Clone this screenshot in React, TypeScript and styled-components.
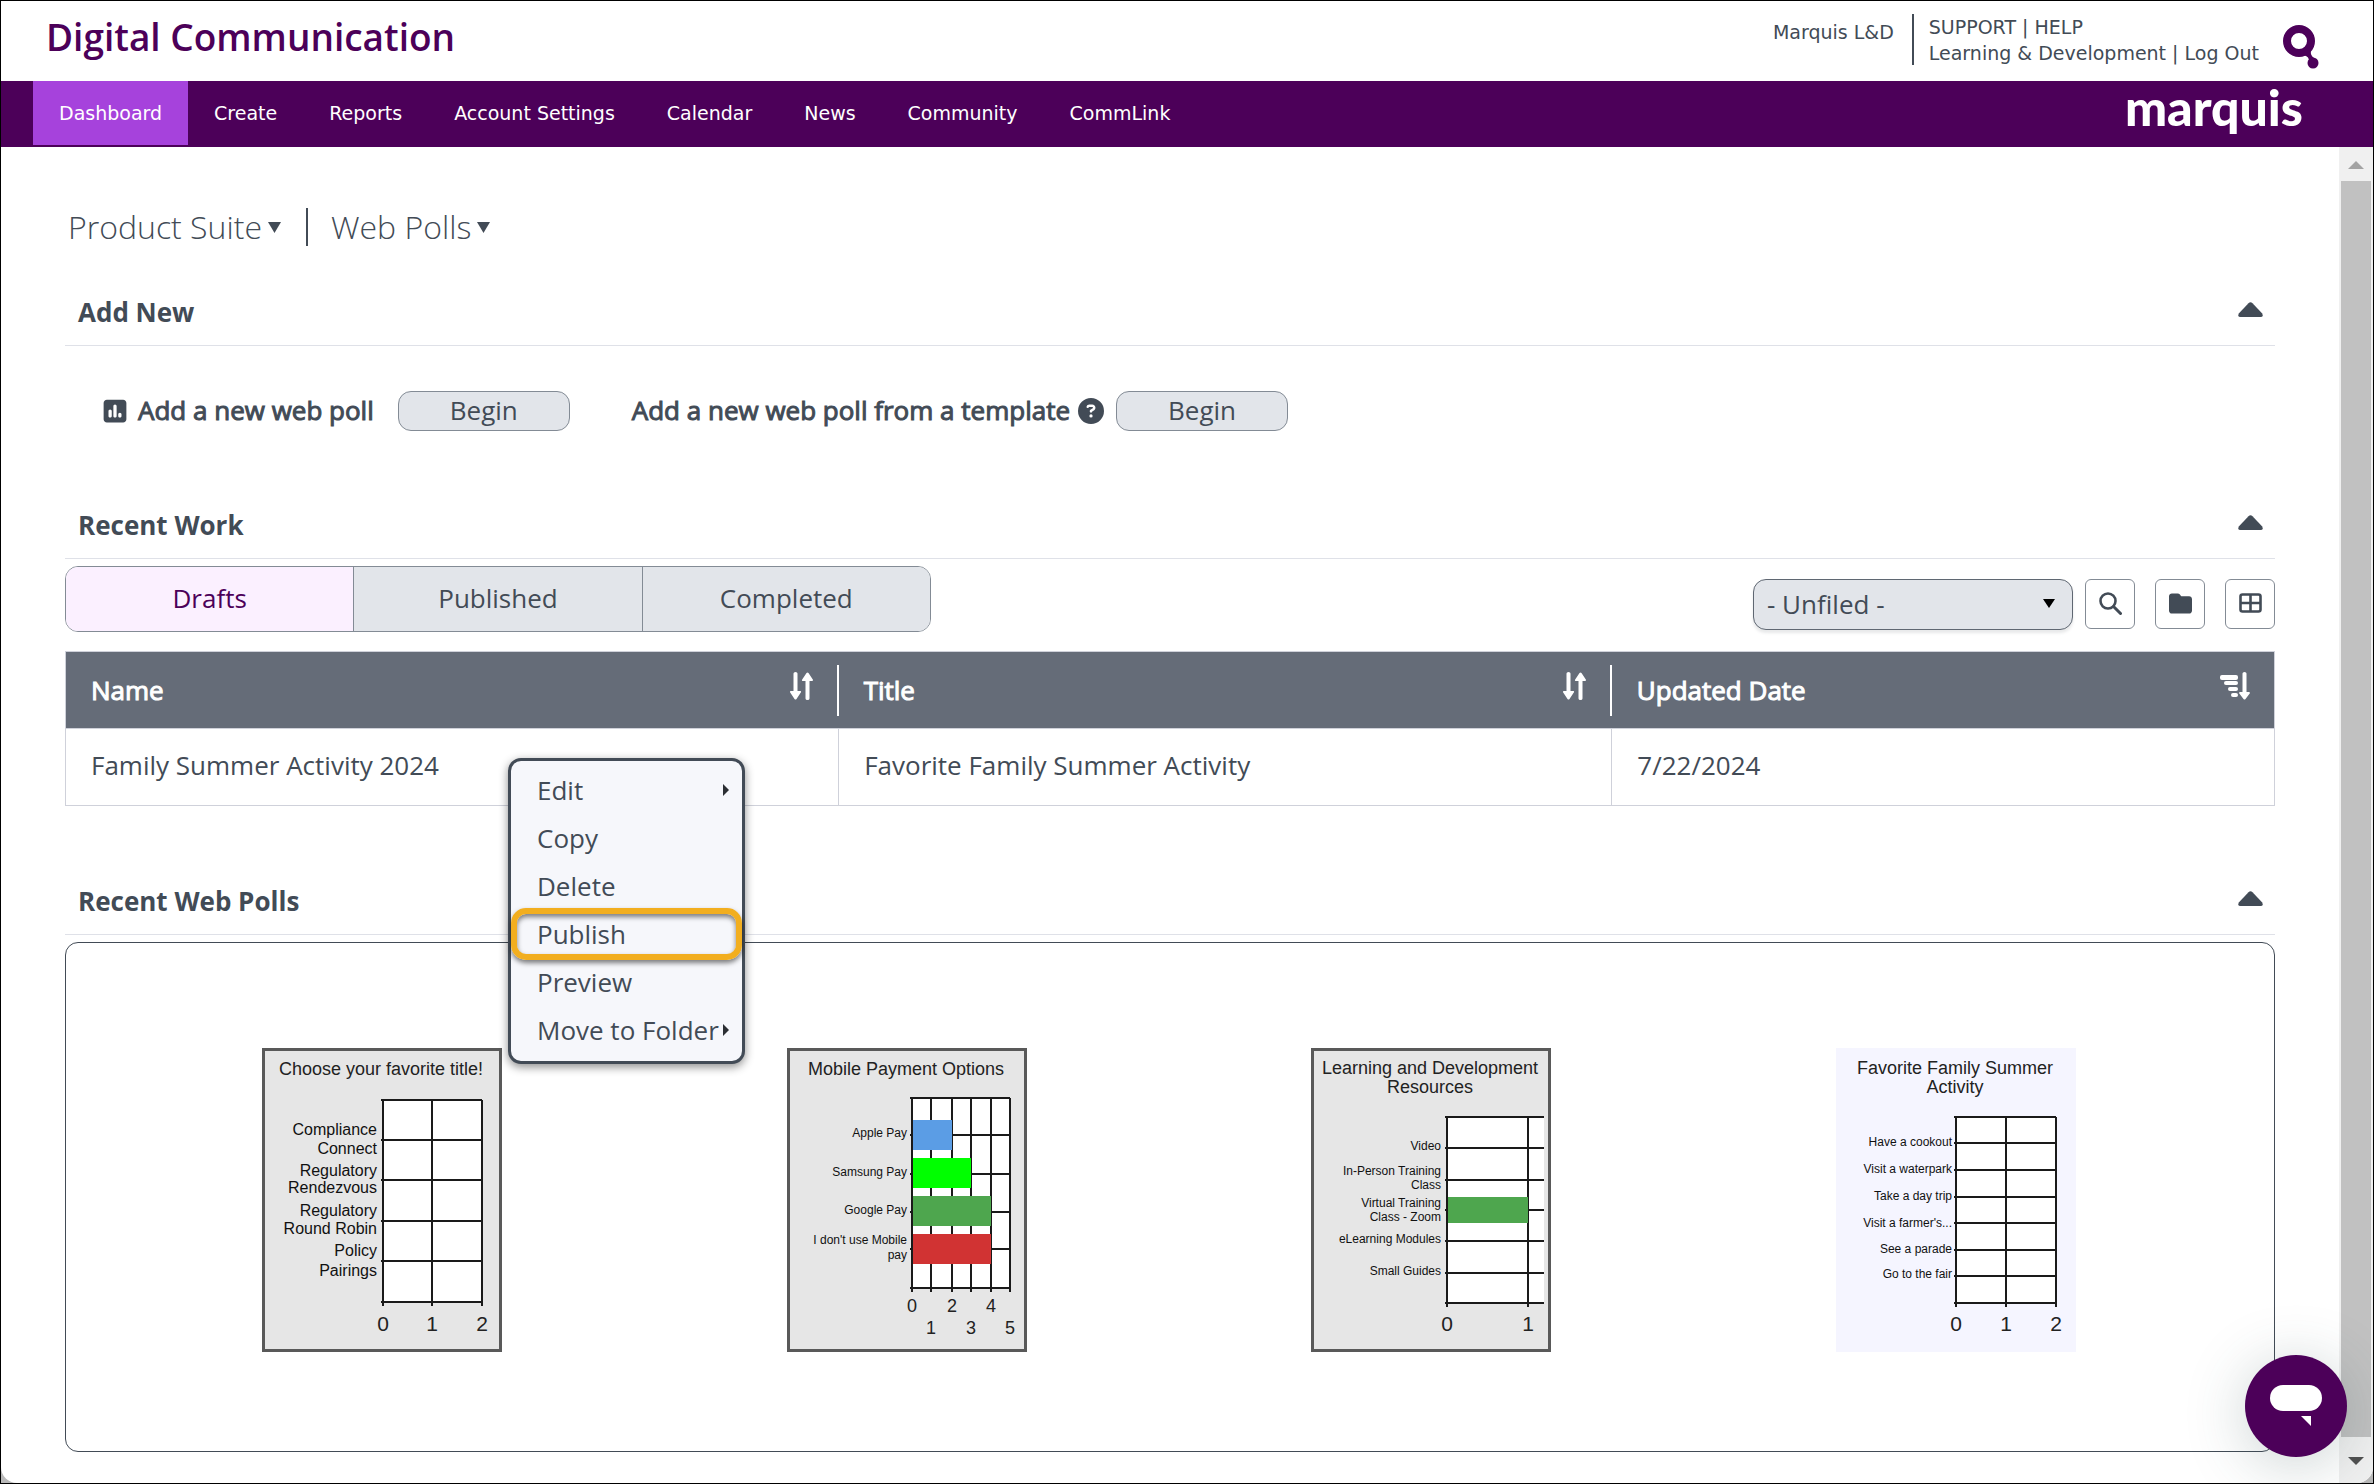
import React, { useState } from "react";
import styled, { createGlobalStyle } from "styled-components";
import { FaCircleQuestion, FaFolder, FaSquarePollVertical } from "react-icons/fa6";

const ink = "#424b56";
const plum = "#4c0059";
const sans = `"Open Sans", "Noto Sans", sans-serif`;
const wide = `"DejaVu Sans", Verdana, sans-serif`;

const GlobalStyle = createGlobalStyle`
  *, *::before, *::after { box-sizing: border-box; }
  body { margin: 0; background: #b9b9b9; font-family: ${sans}; font-size: 26px; color: ${ink}; }
  button, select { font: inherit; color: inherit; }
  h1, h2, p, ul { margin: 0; padding: 0; }
`;

const Frame = styled.div`
  min-height: 100vh;
  display: flex;
  border: 1px solid #000;
`;

const Window = styled.div`
  flex: 1;
  min-width: 0;
  display: flex;
  flex-direction: column;
  background: #fff;
  border-radius: 0 0 16px 16px;
  overflow: hidden;
`;

/* Top bar */

const Header = styled.header`
  height: 80px;
  padding: 0 54px 0 45px;
  display: flex;
  justify-content: space-between;
  align-items: flex-start;
`;

const Brand = styled.h1`
  padding-top: 8px;
  font-size: 37px;
  line-height: 56px;
  font-weight: 600;
  color: ${plum};
`;

const Account = styled.div`
  display: flex;
  align-items: flex-start;
  padding-top: 13px;
  font-family: ${wide};
  font-size: 19px;
  line-height: 26px;
`;

const Company = styled.p`
  height: 51px;
  padding: 5px 18px 0 0;
  border-right: 2px solid ${ink};
`;

const AccountLinks = styled.div`
  padding: 0 24px 0 15px;
`;

const TextLink = styled.a`
  color: inherit;
  text-decoration: none;
`;

const QMark = styled.svg`
  width: 36px;
  height: 44px;
  margin-top: 11px;
`;

const Nav = styled.nav`
  height: 66px;
  padding: 0 70px 0 32px;
  display: flex;
  align-items: flex-start;
  background: ${plum};
`;

const NavLink = styled.a<{ $active?: boolean }>`
  height: 64px;
  padding: 0 26px;
  font-family: ${wide};
  font-size: 19px;
  line-height: 64px;
  color: #fff;
  text-decoration: none;
  background: ${(p) => (p.$active ? "#a642dc" : "transparent")};
`;

const Wordmark = styled.span`
  margin-left: auto;
  font-family: Lato, sans-serif;
  font-size: 50px;
  line-height: 52px;
  font-weight: 900;
  color: #fff;
`;

/* Scrolling area */

const Body = styled.div`
  flex: 1;
  display: flex;
`;

const Main = styled.main`
  flex: 1;
  min-width: 0;
  padding: 61px 64px 30px;
`;

const Scroller = styled.div`
  width: 34px;
  padding: 0 2px;
  display: flex;
  flex-direction: column;
  background: #f0f0f0;
`;

const ScrollEnd = styled.div<{ $h: number }>`
  height: ${(p) => p.$h}px;
  display: flex;
  align-items: center;
  justify-content: center;
  padding-top: 2px;
`;

const Thumb = styled.div`
  flex: 1;
  background: #c1c1c1;
`;

const Crumbs = styled.div`
  height: 38px;
  display: flex;
  align-items: center;
  margin-bottom: 34px;
`;

const Crumb = styled.button`
  display: flex;
  align-items: center;
  gap: 6px;
  padding: 0 25px 0 0;
  border: 0;
  background: none;
  font-size: 32px;
  line-height: 38px;
  font-weight: 300;

  & + & {
    padding-left: 23px;
    border-left: 2px solid ${ink};
  }
  &:first-child {
    padding-left: 3px;
  }
`;

const SectionHead = styled.div`
  height: 66px;
  padding: 0 12px 2px 13px;
  display: flex;
  align-items: center;
  justify-content: space-between;
  border-bottom: 1px solid #dfe1e8;
`;

const SectionTitle = styled.h2`
  font-size: 26px;
  line-height: 36px;
  font-weight: 700;
`;

const Toggle = styled.button`
  display: flex;
  padding: 0;
  margin-bottom: 4px;
  border: 0;
  background: none;
`;

/* Add New */

const AddRow = styled.div`
  display: flex;
  gap: 62px;
  padding: 45px 0 62px 38px;
`;

const AddItem = styled.div`
  display: flex;
  align-items: center;
  height: 40px;
`;

const AddLabel = styled.span<{ $gap: number }>`
  margin-right: ${(p) => p.$gap}px;
  padding-bottom: 2px;
  line-height: 36px;
  -webkit-text-stroke: 1px currentColor;
`;

const PollIcon = styled(FaSquarePollVertical)`
  width: 24px;
  height: 26px;
  margin-right: 11px;
`;

const HelpIcon = styled(FaCircleQuestion)`
  width: 26px;
  height: 26px;
  margin-right: 12px;
`;

const BeginButton = styled.button`
  width: 172px;
  height: 40px;
  padding: 0 0 2px;
  border: 1px solid #838b95;
  border-radius: 13px;
  background: #e2e5ea;
  line-height: 36px;
`;

/* Recent Work */

const Toolbar = styled.div`
  display: flex;
  align-items: flex-end;
  justify-content: space-between;
  padding-top: 7px;
  margin-bottom: 19px;
`;

const Tabs = styled.div`
  width: 866px;
  height: 66px;
  display: flex;
  border: 1px solid #838b95;
  border-radius: 13px;
  overflow: hidden;
`;

const Tab = styled.button<{ $active: boolean }>`
  flex: 1;
  padding: 0 0 2px;
  border: 0;
  line-height: 36px;
  color: ${(p) => (p.$active ? plum : ink)};
  background: ${(p) => (p.$active ? "#fbf0ff" : "#e2e5ea")};

  & + & {
    border-left: 1px solid #838b95;
  }
`;

const Tools = styled.div`
  display: flex;
  align-items: flex-start;
  gap: 12px;
  padding-bottom: 2px;
`;

const SelectBox = styled.div`
  position: relative;

  svg {
    position: absolute;
    right: 18px;
    top: 20px;
    pointer-events: none;
  }
`;

const FolderSelect = styled.select`
  display: block;
  width: 320px;
  height: 51px;
  padding: 0 40px 2px 13px;
  appearance: none;
  border: 1px solid #5f6772;
  border-radius: 13px;
  background: #e2e5ea;
  box-shadow: 0 3px 3px rgba(66, 75, 86, 0.12);
`;

const IconButtons = styled.div`
  display: flex;
  gap: 20px;
`;

const IconButton = styled.button`
  width: 50px;
  height: 50px;
  padding: 0 0 2px;
  display: flex;
  align-items: center;
  justify-content: center;
  border: 1px solid #838b95;
  border-radius: 6px;
  background: #fff;
`;

const TableArea = styled.div`
  position: relative;
  margin-bottom: 63px;
`;

const Table = styled.table`
  width: 100%;
  table-layout: fixed;
  border-collapse: collapse;
  border: 1px solid #cfd1da;
`;

const HeadCell = styled.th<{ $w: number }>`
  width: ${(p) => p.$w}%;
  padding: 13px 0 12px;
  background: #656c78;
  color: #fff;
  text-align: left;
  font-weight: 400;
  -webkit-text-stroke: 1px currentColor;

  &:not(:last-child) > div {
    border-right: 2px solid #fff;
  }
`;

const HeadInner = styled.div`
  height: 51px;
  padding: 0 24px 0 25px;
  display: flex;
  justify-content: space-between;
  line-height: 50px;
`;

const SortButton = styled.button`
  display: flex;
  align-items: flex-start;
  padding: 7px 0 0;
  border: 0;
  background: none;
`;

const Cell = styled.td`
  height: 77px;
  padding: 0 25px 4px;
  border: 1px solid #cfd1da;
  line-height: 36px;
`;

const Menu = styled.ul`
  position: absolute;
  left: 443px;
  top: 107px;
  width: 237px;
  padding: 6px 0;
  list-style: none;
  background: #f6f7fb;
  border: 3px solid ${ink};
  border-radius: 13px;
  box-shadow: 0 3px 10px rgba(0, 0, 0, 0.45);
`;

const MenuItem = styled.li`
  position: relative;
`;

const MenuButton = styled.button`
  width: 100%;
  height: 48px;
  display: flex;
  align-items: center;
  justify-content: space-between;
  padding: 0 13px 2px 26px;
  border: 0;
  background: none;
  text-align: left;
  white-space: nowrap;
`;

const Highlight = styled.span`
  position: absolute;
  inset: -3px 0 -1px;
  border: 6px solid #f2ae1f;
  border-radius: 15px;
  box-shadow: 0 3px 5px rgba(0, 0, 0, 0.5), inset 0 3px 5px rgba(0, 0, 0, 0.5);
  pointer-events: none;
`;

/* Recent Web Polls */

const PollPanel = styled.div`
  margin-top: 7px;
  padding: 105px 56px 99px 54px;
  display: grid;
  grid-template-columns: repeat(4, 1fr);
  justify-items: center;
  border: 1px solid ${ink};
  border-radius: 13px;
`;

const PollCard = styled.svg<{ $plain?: boolean }>`
  display: block;
  width: 240px;
  height: 304px;
  background: ${(p) => (p.$plain ? "#f5f5ff" : "#e6e6e6")};
  outline: ${(p) => (p.$plain ? "none" : "3px solid #595959")};
  outline-offset: -3px;
  font-family: "Liberation Sans", Arial, sans-serif;
`;

const ChatButton = styled.button`
  position: fixed;
  right: 27px;
  bottom: 27px;
  width: 102px;
  height: 102px;
  padding: 0;
  display: flex;
  align-items: center;
  justify-content: center;
  border: 0;
  border-radius: 50%;
  background: ${plum};
  box-shadow: 0 8px 60px rgba(50, 80, 80, 0.25);
`;

const Down = ({ w = 13, h = 11, fill = ink }) => (
  <svg width={w} height={h} viewBox="0 0 12 10" preserveAspectRatio="none" aria-hidden="true">
    <path d="M0 0H12L6 10Z" fill={fill} />
  </svg>
);

const Right = () => (
  <svg width="6" height="12" viewBox="0 0 6 12" aria-hidden="true">
    <path d="M0 0L6 6L0 12Z" fill="#2b2f33" />
  </svg>
);

const SortIcon = () => (
  <svg width="23" height="28" viewBox="0 0 23 28" fill="#fff" aria-hidden="true">
    <path d="M3.500 1.500Q3.500 0 5.500 0T7.500 1.500V19H10.500Q11.500 19.500 10.800 20.600L6.500 27Q5.500 28 4.500 27L.2 20.600Q-.4 19.500 .6 19H3.500Z" />
    <path d="M19.500 26.500Q19.500 28 17.500 28T15.500 26.500V9H12.500Q11.500 8.500 12.200 7.400L16.500 1Q17.500 0 18.500 1L22.800 7.400Q23.400 8.500 22.400 9H19.500Z" />
  </svg>
);

const SortDownIcon = () => (
  <svg width="30" height="28" viewBox="0 0 30 28" fill="#fff" aria-hidden="true">
    <rect x="0" y="3" width="18" height="5" rx="2" />
    <rect x="4" y="9" width="14" height="4" rx="2" />
    <rect x="8" y="15" width="10" height="4" rx="2" />
    <rect x="11" y="21" width="7" height="4" rx="2" />
    <path d="M22.500 1.500Q22.500 0 24.500 0T26.500 1.500V20H29Q30.500 20.500 29.500 21.800L25.500 27Q24.500 28 23.500 27L19.500 21.800Q18.500 20.500 20 20H22.500Z" />
  </svg>
);

const SearchIcon = () => (
  <svg width="23" height="23" viewBox="0 0 23 23" fill="none" stroke={ink} aria-hidden="true">
    <circle cx="9" cy="9" r="7.500" strokeWidth="2.600" />
    <path d="M14.500 14.500L21.500 21.500" strokeWidth="3" strokeLinecap="round" />
  </svg>
);

const GridIcon = () => (
  <svg width="23" height="20" viewBox="0 0 23 20" fill="none" stroke={ink} strokeWidth="2.600" aria-hidden="true">
    <rect x="1.500" y="1.500" width="20" height="17" rx="2" />
    <path d="M11.500 1.500V18.500M1.500 10H21.500" />
  </svg>
);

const Section = ({ title, children }: { title: string; children: React.ReactNode }) => {
  const [open, setOpen] = useState(true);
  return (
    <section>
      <SectionHead>
        <SectionTitle>{title}</SectionTitle>
        <Toggle aria-label={`Toggle ${title}`} aria-expanded={open} onClick={() => setOpen(!open)}>
          <svg width="25" height="15" viewBox="0 0 25 15" fill={ink}>
            <path d="M10.500 1.200Q12.500 -.8 14.500 1.200L24 11.200Q26 15 22.500 15H2.500Q-1 15 1 11.200Z" />
          </svg>
        </Toggle>
      </SectionHead>
      {open && children}
    </section>
  );
};

type Label = [text: string, y: number];
type Bar = { y: number; h: number; to: number; fill: string };
type Poll = {
  title: string[];
  xs: number[];
  ys: number[];
  right?: number;
  labelX: number;
  labelSize: number;
  labels: Label[];
  bars?: Bar[];
  tickSize: number;
  tickRows: number[];
  plain?: boolean;
};

const polls: Poll[] = [
  {
    title: ["Choose your favorite title!"],
    xs: [121, 170, 220],
    ys: [52, 92, 132, 173, 213, 254],
    labelX: 115,
    labelSize: 16,
    labels: [
      ["Compliance", 87], ["Connect", 106], ["Regulatory", 128], ["Rendezvous", 145],
      ["Regulatory", 168], ["Round Robin", 186], ["Policy", 208], ["Pairings", 228],
    ],
    tickSize: 21,
    tickRows: [283],
  },
  {
    title: ["Mobile Payment Options"],
    xs: [125, 144, 165, 184, 204, 223],
    ys: [50, 87, 126, 164, 201, 240],
    labelX: 120,
    labelSize: 12,
    labels: [
      ["Apple Pay", 89], ["Samsung Pay", 128], ["Google Pay", 166],
      ["I don't use Mobile", 196], ["pay", 211],
    ],
    bars: [
      { y: 72, h: 30, to: 165, fill: "#5b9de5" },
      { y: 110, h: 30, to: 184, fill: "#00ff00" },
      { y: 148, h: 30, to: 204, fill: "#4ea64e" },
      { y: 186, h: 30, to: 204, fill: "#d13333" },
    ],
    tickSize: 18,
    tickRows: [264, 286],
  },
  {
    title: ["Learning and Development", "Resources"],
    xs: [136, 217],
    ys: [69, 100, 132, 162, 193, 225, 255],
    right: 233,
    labelX: 130,
    labelSize: 12,
    labels: [
      ["Video", 102], ["In-Person Training", 127], ["Class", 141], ["Virtual Training", 159],
      ["Class - Zoom", 173], ["eLearning Modules", 195], ["Small Guides", 227],
    ],
    bars: [{ y: 149, h: 26, to: 217, fill: "#4ea64e" }],
    tickSize: 21,
    tickRows: [283],
  },
  {
    title: ["Favorite Family Summer", "Activity"],
    xs: [120, 170, 220],
    ys: [69, 95, 122, 149, 175, 202, 228, 255],
    labelX: 116,
    labelSize: 12,
    labels: [
      ["Have a cookout", 98], ["Visit a waterpark", 125], ["Take a day trip", 152],
      ["Visit a farmer's...", 179], ["See a parade", 205], ["Go to the fair", 230],
    ],
    tickSize: 21,
    tickRows: [283],
    plain: true,
  },
];

const PollChart = ({ poll }: { poll: Poll }) => {
  const { xs, ys, title, labels, bars = [], tickRows } = poll;
  const left = xs[0];
  const right = poll.right ?? xs[xs.length - 1];
  const top = ys[0];
  const bottom = ys[ys.length - 1];
  return (
    <PollCard $plain={poll.plain} viewBox="0 0 240 304" role="img" aria-label={title.join(" ")}>
      {title.map((line, i) => (
        <text key={line} x="119" y={(title.length > 1 ? 26 : 27) + i * 19} fontSize="18" textAnchor="middle" fill="#222">
          {line}
        </text>
      ))}
      <rect x={left} y={top} width={right - left} height={bottom - top} fill="#fff" />
      <g stroke="#1a1a1a" strokeWidth="2">
        {xs.map((x) => <path key={x} d={`M${x} ${top}V${bottom + 4}`} />)}
        {ys.map((y) => <path key={y} d={`M${left - 2} ${y}H${right}`} />)}
      </g>
      {bars.map((b) => <rect key={b.y} x={left + 1} y={b.y} width={b.to - left - 1} height={b.h} fill={b.fill} />)}
      {labels.map(([text, y]) => (
        <text key={y} x={poll.labelX} y={y} fontSize={poll.labelSize} textAnchor="end" fill="#111">
          {text}
        </text>
      ))}
      {xs.map((x, i) => (
        <text key={x} x={x} y={tickRows[i % tickRows.length]} fontSize={poll.tickSize} textAnchor="middle" fill="#222">
          {i}
        </text>
      ))}
    </PollCard>
  );
};

const navItems = ["Dashboard", "Create", "Reports", "Account Settings", "Calendar", "News", "Community", "CommLink"];
const tabItems = ["Drafts", "Published", "Completed"];
const menuItems = ["Edit", "Copy", "Delete", "Publish", "Preview", "Move to Folder"];
const submenus = ["Edit", "Move to Folder"];

export default function App() {
  const [tab, setTab] = useState("Drafts");
  return (
    <Frame>
      <GlobalStyle />
      <Window>
        <Header>
          <Brand>Digital Communication</Brand>
          <Account>
            <Company>Marquis L&amp;D</Company>
            <AccountLinks>
              <div><TextLink href="#support">SUPPORT</TextLink> | <TextLink href="#help">HELP</TextLink></div>
              <div><TextLink href="#profile">Learning &amp; Development</TextLink> | <TextLink href="#logout">Log Out</TextLink></div>
            </AccountLinks>
            <QMark viewBox="0 0 36 44" aria-hidden="true">
              <circle cx="16" cy="16" r="12" fill="none" stroke={plum} strokeWidth="8" />
              <path d="M20 30Q27 31 26 38L31 33Q27 30 28 26Z" fill={plum} />
              <circle cx="30" cy="38" r="5.500" fill={plum} />
            </QMark>
          </Account>
        </Header>
        <Nav>
          {navItems.map((item, i) => (
            <NavLink key={item} href={`#${item}`} $active={i === 0}>{item}</NavLink>
          ))}
          <Wordmark>marquis</Wordmark>
        </Nav>
        <Body>
          <Main>
            <Crumbs>
              <Crumb>Product Suite<Down /></Crumb>
              <Crumb>Web Polls<Down /></Crumb>
            </Crumbs>

            <Section title="Add New">
              <AddRow>
                <AddItem>
                  <PollIcon />
                  <AddLabel $gap={24}>Add a new web poll</AddLabel>
                  <BeginButton>Begin</BeginButton>
                </AddItem>
                <AddItem>
                  <AddLabel $gap={8}>Add a new web poll from a template</AddLabel>
                  <HelpIcon />
                  <BeginButton>Begin</BeginButton>
                </AddItem>
              </AddRow>
            </Section>

            <Section title="Recent Work">
              <Toolbar>
                <Tabs role="tablist">
                  {tabItems.map((t) => (
                    <Tab key={t} role="tab" aria-selected={t === tab} $active={t === tab} onClick={() => setTab(t)}>{t}</Tab>
                  ))}
                </Tabs>
                <Tools>
                  <SelectBox>
                    <FolderSelect aria-label="Folder">
                      <option>- Unfiled -</option>
                    </FolderSelect>
                    <Down w={12} h={9} fill="#000" />
                  </SelectBox>
                  <IconButtons>
                    <IconButton aria-label="Search"><SearchIcon /></IconButton>
                    <IconButton aria-label="Folders"><FaFolder size={23} /></IconButton>
                    <IconButton aria-label="Grid view"><GridIcon /></IconButton>
                  </IconButtons>
                </Tools>
              </Toolbar>
              <TableArea>
                <Table>
                  <thead>
                    <tr>
                      <HeadCell $w={35}><HeadInner>Name<SortButton aria-label="Sort by name"><SortIcon /></SortButton></HeadInner></HeadCell>
                      <HeadCell $w={35}><HeadInner>Title<SortButton aria-label="Sort by title"><SortIcon /></SortButton></HeadInner></HeadCell>
                      <HeadCell $w={30}><HeadInner>Updated Date<SortButton aria-label="Sort by date"><SortDownIcon /></SortButton></HeadInner></HeadCell>
                    </tr>
                  </thead>
                  <tbody>
                    <tr>
                      <Cell>Family Summer Activity 2024</Cell>
                      <Cell>Favorite Family Summer Activity</Cell>
                      <Cell>7/22/2024</Cell>
                    </tr>
                  </tbody>
                </Table>
                <Menu>
                  {menuItems.map((item) => (
                    <MenuItem key={item}>
                      <MenuButton>{item}{submenus.includes(item) && <Right />}</MenuButton>
                      {item === "Publish" && <Highlight />}
                    </MenuItem>
                  ))}
                </Menu>
              </TableArea>
            </Section>

            <Section title="Recent Web Polls">
              <PollPanel>
                {polls.map((poll) => <PollChart key={poll.title[0]} poll={poll} />)}
              </PollPanel>
            </Section>
          </Main>
          <Scroller aria-hidden="true">
            <ScrollEnd $h={34}>
              <svg width="16" height="8" viewBox="0 0 16 8"><path d="M0 8L8 0L16 8Z" fill="#a3a3a3" /></svg>
            </ScrollEnd>
            <Thumb />
            <ScrollEnd $h={46}>
              <svg width="16" height="8" viewBox="0 0 16 8"><path d="M0 0H16L8 8Z" fill="#505050" /></svg>
            </ScrollEnd>
          </Scroller>
        </Body>
      </Window>
      <ChatButton aria-label="Open chat">
        <svg width="52" height="42" viewBox="0 0 52 42" fill="#fff">
          <rect width="52" height="26" rx="13" />
          <path d="M31 31H41V41Z" />
        </svg>
      </ChatButton>
    </Frame>
  );
}
